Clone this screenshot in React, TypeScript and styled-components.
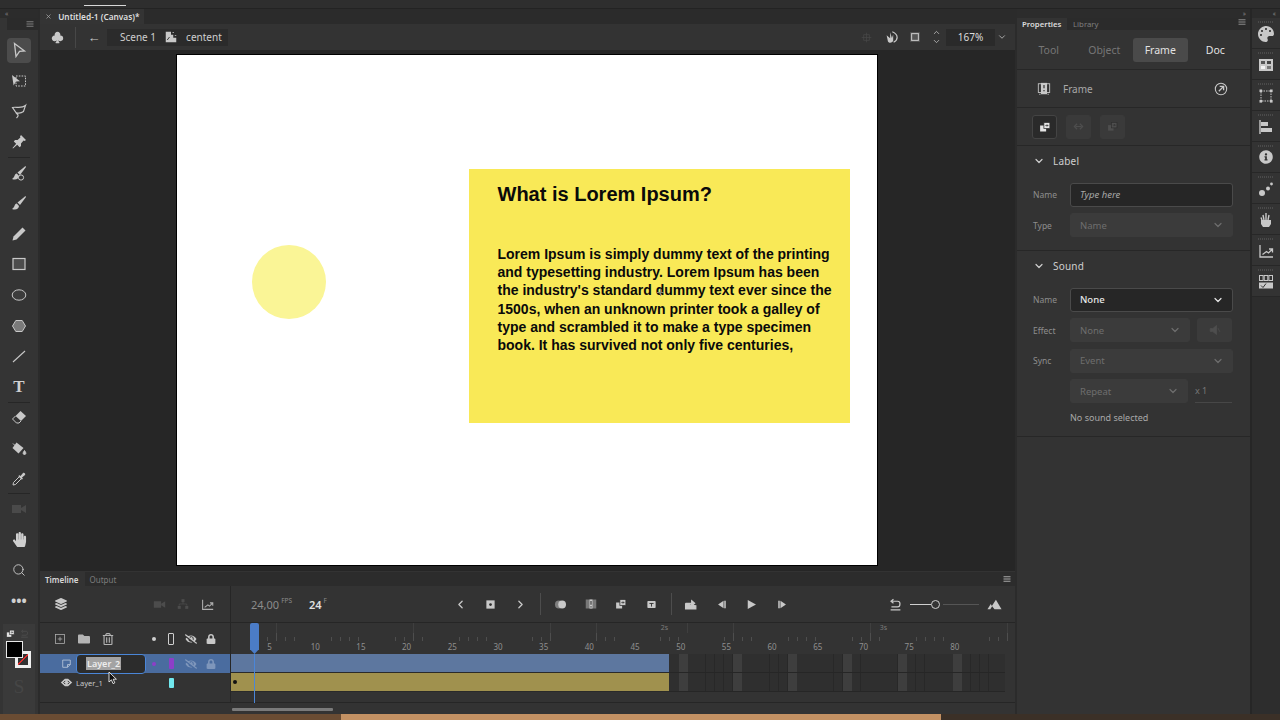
import React from 'react';
import styled, { createGlobalStyle } from 'styled-components';
import { ChevronDown, ChevronLeft, ChevronRight, ChevronUp, Search, X } from 'lucide-react';
import { BsSuitClubFill } from 'react-icons/bs';
import { FaEyeSlash, FaFolder, FaHandPaper, FaInfoCircle, FaLayerGroup, FaLock, FaPalette, FaRegTrashAlt } from 'react-icons/fa';

const GlobalStyle = createGlobalStyle`
  html, body { margin: 0; padding: 0; background: #2b2b2b; }
  * { box-sizing: border-box; }
  #root { width: 1280px; height: 720px; overflow: hidden; font-family: "Noto Sans", "Open Sans", sans-serif; }
`;

const icons: Record<string, React.ReactNode> = {
  select: <path d="M3.5 1.5 13.5 9 8.5 9.4 5 14.5Z" fill="none" stroke="currentColor" strokeWidth="1.3" />,
  transform: <><rect x="5" y="3" width="9.5" height="10" fill="none" stroke="currentColor" strokeDasharray="1.6 1.2" /><path d="M1 2 9 8.2 5 8.6 2.6 12.5Z" fill="currentColor" /></>,
  lasso: <path d="M1.5 4.5C5 3.5 10.5 6 14.5 2.5L12.5 8.5C10.5 10 7.5 10.5 5 9.5ZM5 9.5C5 11 8 11 7 13 6.5 14 6 14.5 5.5 15" fill="none" stroke="currentColor" strokeWidth="1.2" />,
  pin: <path d="M10 1 15 6 13.6 7 12.6 6.6 10 9.4 10 12 8.6 13.2 6.2 10.8 2 14.5 1.5 14 5.2 9.8 2.8 7.4 4 6 6.6 6 9.4 3.4 9 2.4Z" fill="currentColor" />,
  fluid: <><path d="M14.5 1 6.5 7.5 9 10 15 2Z" fill="currentColor" /><circle cx="10" cy="12.5" r="2.6" fill="none" stroke="currentColor" /><path d="M5.8 8.5C3 9 4 12.5 1 14 5 15.5 8 13.5 8 11Z" fill="currentColor" /></>,
  brush: <><path d="M14.5 1 6.5 7.5 9 10 15 2Z" fill="currentColor" /><path d="M5.8 8.5C3 9 4 12.5 1 14 5 15.5 8 13.5 8 11Z" fill="currentColor" /></>,
  pencil: <path d="M11.5 1.5 14.5 4.5 5.5 13.5 1.5 14.5 2.5 10.5Z" fill="currentColor" />,
  rect: <rect x="2" y="2.5" width="12" height="11" fill="#4c4c4c" stroke="currentColor" strokeWidth="1.2" />,
  oval: <ellipse cx="8" cy="8" rx="6.8" ry="5.2" fill="#3c3c3c" stroke="currentColor" strokeWidth="1" />,
  poly: <path d="M4.8 2.5H11.2L14.5 8 11.2 13.5H4.8L1.5 8Z" fill="#7a7a7a" stroke="currentColor" />,
  line: <path d="M2 14 14 3" stroke="currentColor" strokeWidth="1.1" />,
  eraser: <><path d="M9.5 2 15 7 10 12 4.5 7Z" fill="currentColor" /><path d="M4.5 7 1.5 10 5.5 14H8L10 12" fill="none" stroke="currentColor" /></>,
  bucket: <><path d="M5.5 2.5 12.5 8 7.5 13.5 1.5 8Z" fill="currentColor" /><path d="M2 3.5 4.5 6M13.5 10.5C15.5 13 15 14.5 13.5 14.5 12 14.5 11.5 13 13.5 10.5Z" fill="currentColor" stroke="currentColor" /></>,
  dropper: <><path d="M9 5 11 7 4.5 13.5 2 14 2.5 11.5Z" fill="none" stroke="currentColor" /><path d="M8 4 9.5 5 12 2C13 1 15 3 14 4L11 6.5 12 8 10.5 8.5 7.5 5.5Z" fill="currentColor" /></>,
  camera: <><rect x="1" y="4" width="9" height="8" fill="currentColor" /><path d="M10 7 15 4V12L10 9Z" fill="currentColor" /></>,
  parent: <><rect x="6" y="1.5" width="4" height="4" fill="currentColor" /><rect x="1" y="10.5" width="4" height="4" fill="currentColor" /><rect x="11" y="10.5" width="4" height="4" fill="currentColor" /><path d="M8 5V8H3V10M8 8H13V10" fill="none" stroke="currentColor" /></>,
  graph: <path d="M2 2V14H15M4.5 11.5 8.5 8.5 10.5 10 14 6.5M11 6H14.5V9.5" fill="none" stroke="currentColor" strokeWidth="1.3" />,
  newLayer: <><rect x="2" y="2" width="12" height="12" fill="none" stroke="currentColor" /><path d="M8 5V11M5 8H11" stroke="currentColor" /></>,
  frameKey: <><rect x="2" y="2" width="12" height="12" fill="currentColor" /><circle cx="8" cy="8" r="2" fill="#2c2c2c" /></>,
  onion: <><circle cx="6" cy="8" r="4.8" fill="#7f7f7f" /><circle cx="10" cy="8" r="4.8" fill="currentColor" /></>,
  multi: <><rect x="1" y="2" width="14" height="12" fill="#777" /><rect x="6" y="2" width="4" height="12" fill="currentColor" /><path d="M8 4V9M8 11V12.5" stroke="#2c2c2c" strokeWidth="1.4" /></>,
  swap: <><rect x="1.5" y="6" width="8" height="8" fill="currentColor" /><rect x="6.5" y="2" width="8" height="8" fill="currentColor" stroke="#2f2f2f" /><path d="M8.5 6H12M10.5 4.5 12 6 10.5 7.5" fill="none" stroke="#2f2f2f" /></>,
  insert: <><rect x="2" y="3" width="12" height="10" rx="1" fill="currentColor" /><path d="M5 6.5H11M8 6.5V11" stroke="#2c2c2c" strokeWidth="1.3" /></>,
  loop: <path d="M2 6.5V13.5H14.5V9M2 6.5H9.5M9.5 3.5 13 6.5 9.5 9.5Z" fill="currentColor" stroke="currentColor" strokeWidth="1.6" />,
  stepBack: <><path d="M11 2.5 3 8 11 13.5Z" fill="currentColor" /><rect x="12" y="2.5" width="2.2" height="11" fill="currentColor" /></>,
  play: <path d="M2.5 1.5 14.5 8 2.5 14.5Z" fill="currentColor" />,
  stepNext: <><rect x="1.8" y="2.5" width="2.2" height="11" fill="currentColor" /><path d="M5 2.5 13 8 5 13.5Z" fill="currentColor" /></>,
  undo: <path d="M2 14.5H14M4 4H10.5C12.5 4 13.5 5.4 13.5 7S12.5 11 10.5 11H3M5.5 1.5 2.5 4 5.5 6.5" fill="none" stroke="currentColor" strokeWidth="1.5" />,
  peaks: <path d="M0.5 13 4 7.5 5.2 9.5 9.5 3 15.5 13H8L5.5 9.8 3.5 13Z" fill="currentColor" />,
  scope: <><path d="M1 8H15M8 1V15" stroke="currentColor" /><rect x="4" y="4" width="8" height="8" fill="none" stroke="currentColor" /></>,
  handTurn: <><path d="M9.5 2C13 3.5 15 6 15 8.5S13 13 11 14" fill="none" stroke="currentColor" strokeWidth="1.4" /><path d="M3 6 7 9.5V2.5L9 9 10.5 5V12C10 14.5 6 15.5 4.5 13Z" fill="currentColor" /></>,
  clip: <><rect x="1.5" y="1.5" width="13" height="13" fill="#555" /><rect x="3.5" y="3.5" width="9" height="9" fill="none" stroke="currentColor" strokeWidth="1.4" /></>,
  breadcrumbClip: <><path d="M1 1H8V5H11V9H15V15H1Z" fill="currentColor" /><path d="M3 12 6 8M10 3 14 1M12 6 15 4" stroke="#2a2a2a" strokeWidth="1.2" /><path d="M10 2H12M13 6H15" stroke="currentColor" /></>,
  frameDoc: <><rect x="1.5" y="2" width="13" height="10" fill="none" stroke="currentColor" /><rect x="4.5" y="1" width="7" height="13" fill="currentColor" /><path d="M8 3.5V7M8 9V10.5" stroke="#333" strokeWidth="1.4" /><path d="M2.5 14H4M12 14H13.5" stroke="currentColor" /></>,
  arrowCircle: <><circle cx="8" cy="8" r="6.5" fill="none" stroke="currentColor" strokeWidth="1.2" /><path d="M5.5 10.5 10.5 5.5M6.5 5H11V9.5" fill="none" stroke="currentColor" strokeWidth="1.5" /></>,
  link: <path d="M6 4 2 8 6 12M10 4 14 8 10 12M4 8H12" fill="none" stroke="currentColor" strokeWidth="1.8" />,
  layerDoc: <path d="M2.5 3H13.5V9.5L9.5 13.5H2.5ZM13.5 9.5H9.5V13.5" fill="none" stroke="currentColor" strokeWidth="1.1" />,
  eyeCode: <><path d="M1 8 6 3.5H10L15 8 10 12.5H6Z" fill="currentColor" /><path d="M6.5 6 4.5 8 6.5 10M9.5 6 11.5 8 9.5 10" fill="none" stroke="#2f2f2f" strokeWidth="1.2" /></>,
  speaker: <path d="M1.5 6H5L10 2V14L5 10H1.5ZM12 5.5 14.5 10.5" fill="currentColor" stroke="currentColor" />,
  swatches: <><rect x="1" y="2" width="14" height="12" fill="currentColor" /><rect x="3" y="4" width="4" height="3" fill="#555" /><rect x="9" y="4" width="4" height="3" fill="#444" /><rect x="3" y="9" width="4" height="3" fill="#f2f2f2" /><rect x="9" y="9" width="4" height="3" fill="#777" /></>,
  handles: <><rect x="3" y="3" width="10" height="10" fill="none" stroke="currentColor" strokeDasharray="1.5 1" /><rect x="1.5" y="1.5" width="2.6" height="2.6" fill="currentColor" /><rect x="12" y="1.5" width="2.6" height="2.6" fill="currentColor" /><rect x="1.5" y="12" width="2.6" height="2.6" fill="currentColor" /><rect x="12" y="12" width="2.6" height="2.6" fill="currentColor" /></>,
  align: <><path d="M2 1V15" stroke="currentColor" strokeWidth="1.4" /><rect x="3" y="3" width="7" height="4" fill="currentColor" /><rect x="3" y="9" width="11" height="4" fill="currentColor" /></>,
  dots: <><circle cx="4" cy="12" r="3" fill="currentColor" /><circle cx="10" cy="7.5" r="2" fill="currentColor" /><circle cx="13.5" cy="3" r="1.4" fill="currentColor" /></>,
  handBrush: <><path d="M3 8H13V12L11 15H5L3 12Z" fill="currentColor" /><path d="M8 1V8M5 3 6 8M11 3 10 8M3 5.5 4 8" stroke="currentColor" strokeWidth="1.4" /></>,
  components: <><rect x="1.5" y="1.5" width="3.6" height="5" fill="none" stroke="currentColor" /><rect x="6.2" y="1.5" width="3.6" height="5" fill="none" stroke="currentColor" /><rect x="10.9" y="1.5" width="3.6" height="5" fill="none" stroke="currentColor" /><rect x="1" y="8.5" width="14" height="6" fill="currentColor" /><path d="M3 11.5 5 13.5 8 9.5" fill="none" stroke="#333" /></>,
  hamburger: <path d="M1 3.5H15M1 8H15M1 12.5H15" stroke="currentColor" strokeWidth="2.4" />,
};

const Svg = styled.svg<{ $tone?: string }>`
  display: block;
  flex: none;
  color: ${({ $tone }) => $tone || '#c8c8c8'};
`;

const Icon: React.FC<{ name: string; size?: number; tone?: string }> = ({ name, size = 16, tone }) => (
  <Svg $tone={tone} width={size} height={size} viewBox="0 0 16 16">{icons[name]}</Svg>
);

const Page = styled.div`
  width: 1280px;
  height: 720px;
  display: flex;
  flex-direction: column;
  background: #2b2b2b;
  color: #c8c8c8;
`;

const TopStrip = styled.div`
  height: 9px;
  flex: none;
  padding: 5px 0 0 84px;
  background: #2e2e2e;
  border-bottom: 1px solid #232323;
`;

const TitleMark = styled.div`
  width: 42px;
  height: 1px;
  background: #d8d8d8;
`;

const Main = styled.div`
  flex: 1;
  min-height: 0;
  display: flex;
`;

const DesktopStrip = styled.div`
  height: 6px;
  flex: none;
  display: flex;
  background: #3b3027;
`;

const DesktopEdge = styled.div`
  width: 341px;
  background: #6a4c33;
`;

const DesktopWindow = styled.div`
  width: 600px;
  background: #c39163;
`;

/* tools on the left */
const ToolBar = styled.div`
  width: 38px;
  flex: none;
  display: flex;
  flex-direction: column;
  background: #343434;
  margin-right: 2px;
`;

const Collapse = styled.div<{ $align?: string }>`
  height: 9px;
  flex: none;
  display: flex;
  align-items: center;
  justify-content: ${({ $align }) => $align || 'flex-start'};
  padding: 0 5px;
  background: #2c2c2c;
  color: #7d7d7d;
  font-size: 7px;
  line-height: 9px;
  letter-spacing: -1px;
`;

const ToolMenu = styled.div`
  height: 12px;
  margin-left: 7px;
  flex: none;
  display: flex;
  justify-content: flex-end;
  align-items: center;
  padding-right: 4px;
  background: #2b2b2b;
  margin-bottom: 5px;
`;

const Tool = styled.div<{ $active?: boolean }>`
  height: 30.6px;
  flex: none;
  display: flex;
  align-items: center;
  justify-content: center;
  position: relative;
  &::before {
    content: '';
    position: absolute;
    inset: 3px 7px;
    border-radius: 4px;
    background: ${({ $active }) => ($active ? '#4c4c4c' : 'transparent')};
  }
  & > * { position: relative; }
`;

const ToolGlyph = styled.span<{ $dim?: boolean }>`
  font-family: "Liberation Serif", serif;
  font-weight: ${({ $dim }) => ($dim ? 400 : 700)};
  font-size: ${({ $dim }) => ($dim ? 19 : 17)}px;
  line-height: 1;
  color: ${({ $dim }) => ($dim ? '#464646' : '#d0d0d0')};
`;

const ToolRule = styled.div`
  height: 1px;
  margin: -0.5px 8px;
  background: #262626;
`;

const ColorWell = styled.div`
  flex: 1;
  margin: 8px 3px 0 3px;
  padding-top: 5px;
  background: #3a3a3a;
  display: flex;
  flex-direction: column;
  align-items: center;
`;

const SwapRow = styled.div`
  display: flex;
  gap: 5px;
  align-self: flex-start;
  margin-left: 3px;
`;

const Swatches = styled.div`
  width: 26px;
  height: 27px;
  margin-top: 3px;
  position: relative;
  background: linear-gradient(#0000, #0000);
`;

const StrokeSwatch = styled.div`
  position: absolute;
  right: 1px;
  bottom: 0;
  width: 16px;
  height: 17px;
  background: linear-gradient(135deg, transparent 46%, #e02a2a 46%, #e02a2a 54%, transparent 54%), #333;
  border: 3px solid #f0f0f0;
`;

const FillSwatch = styled.div`
  position: absolute;
  left: 0;
  top: 0;
  width: 17px;
  height: 17px;
  background: #000;
  border: 1.5px solid #e8e8e8;
`;

const DimLetter = styled.div`
  margin-top: 8px;
  height: 24px;
  text-align: center;
`;

/* document column */
const Center = styled.div`
  width: 975px;
  flex: none;
  display: flex;
  flex-direction: column;
`;

const TabBar = styled.div`
  height: 15px;
  flex: none;
  display: flex;
  background: #2b2b2b;
`;

const DocTab = styled.div`
  width: 104px;
  display: flex;
  align-items: center;
  gap: 4px;
  padding-left: 5px;
  background: #343434;
  color: #dedede;
  font-size: 8.3px;
  font-weight: 600;
  white-space: nowrap;
`;

const EditBar = styled.div`
  height: 26px;
  flex: none;
  display: flex;
  align-items: center;
  background: #333;
`;

const ClubSlot = styled.div`
  width: 36px;
  height: 21px;
  display: flex;
  align-items: center;
  justify-content: center;
  border-right: 1px solid #474747;
  color: #c8c8c8;
  margin-right: 10px;
`;

const BackSlot = styled.div`
  width: 16px;
  margin-right: 5px;
  display: flex;
  justify-content: center;
  font-size: 13px;
  line-height: 1;
  font-weight: 700;
  color: #c8c8c8;
`;

const Crumbs = styled.div`
  width: 121px;
  height: 17px;
  display: flex;
  align-items: center;
  padding-left: 13px;
  background: #2b2b2b;
  font-size: 10px;
  color: #cfcfcf;
`;

const CrumbIcon = styled.span`
  margin: 0 9px;
`;

const ViewTools = styled.div`
  margin-left: auto;
  display: flex;
  align-items: center;
  padding-right: 7px;
`;

const ViewSlot = styled.div<{ $w: number }>`
  width: ${({ $w }) => $w}px;
  display: flex;
  flex-direction: column;
  align-items: center;
  justify-content: center;
`;

const ZoomBox = styled.div`
  width: 49px;
  height: 17px;
  margin-right: 0;
  display: flex;
  align-items: center;
  justify-content: center;
  background: #2a2a2a;
  color: #dcdcdc;
  font-size: 10px;
`;

const ZoomChevron = styled.div`
  width: 13px;
  display: flex;
  justify-content: center;
`;

const StageArea = styled.div`
  flex: 1;
  min-height: 0;
  padding: 5px 0 0 137px;
  background: #262626;
`;

const Stage = styled.div`
  width: 700px;
  height: 510px;
  position: relative;
  background: #fff;
  box-shadow: 0 0 0 1px #000;
`;

const Circle = styled.div`
  position: absolute;
  left: 75px;
  top: 190px;
  width: 74px;
  height: 74px;
  border-radius: 50%;
  background: #faf596;
`;

const YellowCard = styled.div`
  position: absolute;
  left: 292px;
  top: 114px;
  width: 381px;
  height: 254px;
  padding: 13px 0 0 28.5px;
  background: #f9e957;
  color: #0a0a0a;
  font-family: "Liberation Sans", Arial, sans-serif;
  font-weight: 700;
`;

const CardTitle = styled.div`
  font-size: 20px;
  line-height: 25px;
`;

const CardBody = styled.div`
  width: 340px;
  margin-top: 38px;
  font-size: 14px;
  line-height: 18.2px;
`;

const CrossCursor = styled.div`
  position: absolute;
  left: 188px;
  top: 120px;
  width: 7px;
  height: 7px;
  background: linear-gradient(#8a8a7a, #8a8a7a) center/1px 100% no-repeat, linear-gradient(#8a8a7a, #8a8a7a) center/100% 1px no-repeat;
`;

/* timeline */
const Timeline = styled.div`
  height: 143px;
  flex: none;
  display: flex;
  flex-direction: column;
  background: #333;
`;

const PanelTabs = styled.div`
  height: 14px;
  flex: none;
  margin-top: 1px;
  display: flex;
  align-items: center;
  background: #2c2c2c;
  padding-right: 4px;
`;

const PanelTab = styled.div<{ $active?: boolean }>`
  height: 100%;
  padding: 0 6px 0 5px;
  display: flex;
  align-items: center;
  background: ${({ $active }) => ($active ? '#333' : 'transparent')};
  color: ${({ $active }) => ($active ? '#d8d8d8' : '#7c7c7c')};
  font-size: 8px;
  font-weight: ${({ $active }) => ($active ? 600 : 400)};
`;

const MenuEnd = styled.div`
  margin-left: auto;
`;

const TimelineRow = styled.div<{ $h: number; $line?: boolean }>`
  height: ${({ $h }) => $h}px;
  flex: none;
  display: flex;
  border-bottom: ${({ $line }) => ($line ? '1px solid #262626' : 'none')};
`;

const LayerCol = styled.div<{ $bg?: string; $pad?: number }>`
  width: 191px;
  flex: none;
  display: flex;
  align-items: center;
  position: relative;
  padding-left: ${({ $pad }) => $pad ?? 0}px;
  background: ${({ $bg }) => $bg || 'transparent'};
  border-right: 1px solid #262626;
`;

const FrameCol = styled.div`
  flex: 1;
  min-width: 0;
  display: flex;
  align-items: center;
`;

const Slot = styled.div<{ $w?: number }>`
  width: ${({ $w }) => $w ?? 24}px;
  flex: none;
  display: flex;
  align-items: center;
  justify-content: center;
`;

const PushRight = styled.div<{ $end: number }>`
  margin-left: auto;
  padding-right: ${({ $end }) => $end}px;
  display: flex;
  align-items: center;
`;

const Fps = styled.div`
  width: 194px;
  margin-left: 20px;
  flex: none;
  display: flex;
  align-items: flex-start;
  gap: 0;
  color: #8c8c8c;
  font-size: 11px;
`;

const Sup = styled.span<{ $gap?: number }>`
  font-size: 6.5px;
  margin: -1px 0 0 2px;
  margin-right: ${({ $gap }) => $gap ?? 0}px;
`;

const FrameNo = styled.span`
  color: #e0e0e0;
  font-weight: 600;
`;

const BarRule = styled.div`
  width: 1px;
  height: 22px;
  flex: none;
  margin: 0 4px;
  background: #4d4d4d;
`;

const ZoomSlider = styled.div`
  width: 69px;
  height: 9px;
  margin: 0 3px;
  position: relative;
  background: linear-gradient(90deg, #d0d0d0 0 21px, transparent 21px 33px, #555 33px) center/100% 1px no-repeat;
`;

const SliderKnob = styled.div`
  position: absolute;
  left: 20.5px;
  top: 0;
  width: 9px;
  height: 9px;
  border-radius: 50%;
  border: 1.5px solid #d0d0d0;
`;

const StatusDot = styled.div<{ $c: string; $s?: number }>`
  width: ${({ $s }) => $s ?? 4}px;
  height: ${({ $s }) => $s ?? 4}px;
  border-radius: 50%;
  background: ${({ $c }) => $c};
`;

const KeyBox = styled.div<{ $c: string; $line?: string; $h?: number; $w?: number }>`
  width: ${({ $w }) => $w ?? 6}px;
  height: ${({ $h }) => $h ?? 10}px;
  border-radius: 1px;
  background: ${({ $c }) => $c};
  border: 1px solid ${({ $line }) => $line || 'transparent'};
`;

const StatusCells: React.FC<{ dot: React.ReactNode; box: React.ReactNode; eye?: string; lock?: string }> = ({ dot, box, eye, lock }) => (
  <PushRight $end={10}>
    <Slot $w={16}>{dot}</Slot>
    <Slot $w={18}>{box}</Slot>
    <Slot $w={21}>{eye && <FaEyeSlash size={12} color={eye} />}</Slot>
    <Slot $w={19}>{lock && <FaLock size={10} color={lock} />}</Slot>
  </PushRight>
);

const NameField = styled.div`
  width: 72px;
  height: 20px;
  margin-left: 2px;
  display: flex;
  align-items: center;
  padding-left: 9px;
  background: #2c2c2c;
  border: 1.5px solid #4a86d8;
  border-radius: 4px;
  font-size: 9px;
  font-weight: 600;
  color: #eee;
`;

const SelectedText = styled.span`
  background: #a3a3a3;
  padding: 0 1px;
`;

const LayerName = styled.span`
  margin-left: 2px;
  font-size: 7.5px;
  color: #c8c8c8;
`;

const Pointer = styled.div`
  position: absolute;
  left: 68px;
  top: 14px;
`;

const Ruler = styled.div`
  width: 100%;
  height: 100%;
  display: flex;
  flex-direction: column;
`;

const Seconds = styled.div`
  height: 10px;
  flex: none;
  display: flex;
  font-size: 7px;
  line-height: 10px;
  color: #7d7d7d;
  background: repeating-linear-gradient(90deg, transparent 0 45.1px, #3f3f3f 45.1px 45.7px);
`;

const Second = styled.span<{ $w: number }>`
  width: ${({ $w }) => $w}px;
  flex: none;
  text-align: right;
  padding-right: 1px;
`;

const Ticks = styled.div`
  height: 8px;
  flex: none;
  background:
    repeating-linear-gradient(90deg, transparent 0 8.64px, #4e4e4e 8.64px 9.14px) 0 100%/100% 4px no-repeat,
    repeating-linear-gradient(90deg, transparent 0 45.2px, #4e4e4e 45.2px 45.7px);
`;

const RulerLabels = styled.div`
  flex: 1;
  display: flex;
  padding-left: 15.7px;
`;

const RulerLabel = styled.span`
  width: 45.7px;
  flex: none;
  text-align: center;
  font-size: 8px;
  line-height: 11px;
  color: #8f8f8f;
`;

const Span = styled.div<{ $c: string }>`
  width: 438px;
  height: 100%;
  flex: none;
  display: flex;
  align-items: center;
  padding-left: 2px;
  background: ${({ $c }) => $c};
  border-bottom: 1px solid #2a2a2a;
`;

const EmptyFrames = styled.div`
  width: 336px;
  height: 100%;
  flex: none;
  border-bottom: 1px solid #262626;
  background:
    repeating-linear-gradient(90deg, transparent 0 9.5px, #3e3e3e 9.5px 18.6px, transparent 18.6px 54.84px) 0 0/100% 100%,
    repeating-linear-gradient(90deg, #2f2f2f 0 8.64px, #282828 8.64px 9.14px);
`;

const FrameTrack = styled.div`
  width: 784px;
  flex: none;
  height: 100%;
  display: flex;
`;

const Tracks = styled.div`
  position: relative;
`;

const Playhead = styled.div`
  position: absolute;
  left: 210px;
  top: -31px;
  width: 9px;
  height: 31px;
  background: #4b7cc7;
  border-radius: 2px 2px 0 0;
  clip-path: polygon(0 0, 100% 0, 100% 85%, 50% 100%, 0 85%);
`;

const PlayLine = styled.div`
  position: absolute;
  left: 214px;
  top: 0;
  width: 1px;
  height: 49px;
  background: #4b86d8;
`;

const ScrollRow = styled.div`
  flex: 1;
  padding: 5px 0 0 192px;
`;

const ScrollThumb = styled.div`
  width: 101px;
  height: 3px;
  border-radius: 1px;
  background: #7a7a7a;
`;

/* properties panel */
const Properties = styled.div`
  width: 234px;
  flex: none;
  margin-left: 2px;
  display: flex;
  flex-direction: column;
  background: #333;
  border-right: 1px solid #262626;
`;

const PropTabs = styled.div`
  height: 12px;
  flex: none;
  display: flex;
  background: #2b2b2b;
  padding-right: 4px;
`;

const PropTab = styled.div<{ $active?: boolean }>`
  width: ${({ $active }) => ($active ? 50 : 46)}px;
  display: flex;
  align-items: center;
  padding-left: ${({ $active }) => ($active ? 5 : 6)}px;
  background: ${({ $active }) => ($active ? '#333' : 'transparent')};
  color: ${({ $active }) => ($active ? '#dcdcdc' : '#7f7f7f')};
  font-size: 7.8px;
  font-weight: ${({ $active }) => ($active ? 600 : 400)};
`;

const SubTabs = styled.div`
  height: 40px;
  flex: none;
  display: grid;
  grid-template-columns: repeat(4, 55.5px);
  align-items: center;
  padding-left: 4px;
  border-bottom: 1px solid #272727;
`;

const SubTab = styled.div<{ $state: 'dim' | 'on' | 'plain' }>`
  height: 24px;
  margin: 0 0 0 ${({ $state }) => ($state === 'on' ? 1 : 0)}px;
  display: flex;
  align-items: center;
  justify-content: center;
  border-radius: 3px;
  font-size: 10.5px;
  background: ${({ $state }) => ($state === 'on' ? '#4a4a4a' : 'transparent')};
  color: ${({ $state }) => ($state === 'dim' ? '#767676' : '#e2e2e2')};
`;

const FrameRow = styled.div`
  height: 38px;
  flex: none;
  display: flex;
  align-items: center;
  padding: 0 22px 0 20px;
  border-bottom: 1px solid #272727;
  color: #a8a8a8;
  font-size: 10px;
`;

const FrameLabel = styled.span`
  margin-left: 12px;
  flex: 1;
`;

const SymbolRow = styled.div`
  height: 38px;
  flex: none;
  display: flex;
  align-items: center;
  gap: 9px;
  padding-left: 15px;
  border-bottom: 1px solid #272727;
`;

const SymbolButton = styled.div<{ $on?: boolean }>`
  width: 25px;
  height: 24px;
  display: flex;
  align-items: center;
  justify-content: center;
  border-radius: 3px;
  background: ${({ $on }) => ($on ? '#2a2a2a' : '#3a3a3a')};
  border: 1px solid ${({ $on }) => ($on ? '#444' : '#3a3a3a')};
`;

const Section = styled.div<{ $h: number }>`
  height: ${({ $h }) => $h}px;
  flex: none;
  padding: 0 18px 0 16px;
  border-bottom: 1px solid #272727;
`;

const SectionHead = styled.div`
  height: 30px;
  display: flex;
  align-items: center;
  gap: 8px;
  padding-left: -1px;
  font-size: 10px;
  color: #cfcfcf;
  letter-spacing: 0.2px;
`;

const Fields = styled.div`
  margin-top: 6.5px;
  display: flex;
  flex-direction: column;
  gap: 6.5px;
`;

const Field = styled.div`
  display: flex;
  align-items: center;
  height: 24px;
`;

const FieldLabel = styled.span`
  width: 37px;
  flex: none;
  font-size: 8.5px;
  color: #8e8e8e;
`;

const Control = styled.div<{ $w?: number; $kind?: 'input' | 'on' | 'off' }>`
  width: ${({ $w }) => $w ?? 163}px;
  height: 24px;
  flex: none;
  display: flex;
  align-items: center;
  justify-content: space-between;
  padding: 0 8px 0 9px;
  border-radius: 3px;
  font-size: 9.5px;
  background: ${({ $kind }) => ($kind === 'off' || !$kind ? '#3b3b3b' : '#262626')};
  border: 1px solid ${({ $kind }) => ($kind === 'off' || !$kind ? '#3b3b3b' : '#4a4a4a')};
  color: ${({ $kind }) => ($kind === 'on' ? '#e8e8e8' : $kind === 'input' ? '#a8a8a8' : '#6e6e6e')};
  font-style: ${({ $kind }) => ($kind === 'input' ? 'italic' : 'normal')};
  font-weight: ${({ $kind }) => ($kind === 'on' ? 500 : 400)};
`;

const SpeakerButton = styled.div`
  width: 36px;
  height: 24px;
  margin-left: 7px;
  display: flex;
  align-items: center;
  justify-content: center;
  border-radius: 3px;
  background: #3b3b3b;
`;

const LoopCount = styled.div`
  width: 38px;
  height: 24px;
  margin-left: 7px;
  display: flex;
  align-items: center;
  border-bottom: 1px solid #474747;
  font-size: 9px;
  color: #777;
`;

const SoundNote = styled.div`
  margin: 8px 0 0 37px;
  font-size: 9px;
  line-height: 14px;
  color: #a8a8a8;
`;

/* far right rail */
const Rail = styled.div`
  flex: 1;
  display: flex;
  flex-direction: column;
  background: #2d2d2d;
  border-left: 1px solid #262626;
`;

const RailCell = styled.div`
  height: 31px;
  flex: none;
  padding-top: 3px;
  display: flex;
  flex-direction: column;
  align-items: center;
  background: #333;
  border-bottom: 1px solid #272727;
`;

const Grip = styled.div`
  width: 16px;
  height: 2px;
  margin-bottom: 3px;
  flex: none;
  background: repeating-linear-gradient(90deg, #4a4a4a 0 1px, transparent 1px 2px);
`;

const Chev: React.FC<{ tone?: string }> = ({ tone = '#cfcfcf' }) => <ChevronDown size={12} color={tone} strokeWidth={2.4} />;

const tools = [
  ['transform', 'lasso', 'pin'],
  ['fluid', 'brush', 'pencil', 'rect', 'oval', 'poly', 'line', 'T'],
  ['eraser', 'bucket', 'dropper'],
];

const railIcons = ['swatches', 'handles', 'align', 'info', 'dots', 'handBrush', 'graph', 'components'];
const frameLabels = [5, 10, 15, 20, 25, 30, 35, 40, 45, 50, 55, 60, 65, 70, 75, 80];

const LeftTools = () => (
  <ToolBar>
    <Collapse>‹‹</Collapse>
    <ToolMenu><Icon name="hamburger" size={8} tone="#7c7c7c" /></ToolMenu>
    <Tool $active><Icon name="select" /></Tool>
    {tools.map((group, i) => (
      <React.Fragment key={i}>
        {group.map(t => (
          <Tool key={t}>{t === 'T' ? <ToolGlyph>T</ToolGlyph> : <Icon name={t} />}</Tool>
        ))}
        <ToolRule />
      </React.Fragment>
    ))}
    <Tool><Icon name="camera" tone="#4a4a4a" /></Tool>
    <Tool><FaHandPaper size={15} color="#cfcfcf" /></Tool>
    <Tool><Search size={14} color="#c8c8c8" strokeWidth={1.6} /></Tool>
    <Tool><ToolGlyph as="span" style={{ fontFamily: 'Noto Sans', fontSize: 14 }}>•••</ToolGlyph></Tool>
    <ColorWell>
      <SwapRow>
        <Icon name="swap" size={9} tone="#e0e0e0" />
        <Icon name="undo" size={9} tone="#4e4e4e" />
      </SwapRow>
      <Swatches>
        <StrokeSwatch />
        <FillSwatch />
      </Swatches>
      <DimLetter><ToolGlyph $dim>S</ToolGlyph></DimLetter>
    </ColorWell>
  </ToolBar>
);

const Document = () => (
  <>
    <TabBar>
      <DocTab><X size={7} color="#a8a8a8" strokeWidth={2.5} />&nbsp;Untitled-1 (Canvas)*</DocTab>
    </TabBar>
    <EditBar>
      <ClubSlot><BsSuitClubFill size={13} /></ClubSlot>
      <BackSlot>←</BackSlot>
      <Crumbs>
        Scene 1
        <CrumbIcon><Icon name="breadcrumbClip" size={12} /></CrumbIcon>
        centent
      </Crumbs>
      <ViewTools>
        <ViewSlot $w={24}><Icon name="scope" size={11} tone="#484848" /></ViewSlot>
        <ViewSlot $w={25}><Icon name="handTurn" size={14} /></ViewSlot>
        <ViewSlot $w={24}><Icon name="clip" size={12} /></ViewSlot>
        <ViewSlot $w={19}>
          <ChevronUp size={9} strokeWidth={2} />
          <ChevronDown size={9} strokeWidth={2} />
        </ViewSlot>
        <ZoomBox>167%</ZoomBox>
        <ZoomChevron><ChevronDown size={10} color="#bdbdbd" strokeWidth={2} /></ZoomChevron>
      </ViewTools>
    </EditBar>
    <StageArea>
      <Stage>
        <Circle />
        <YellowCard>
          <CardTitle>What is Lorem Ipsum?</CardTitle>
          <CardBody>
            Lorem Ipsum is simply dummy text of the printing and typesetting industry. Lorem Ipsum has been the industry's standard dummy text ever since the 1500s, when an unknown printer took a galley of type and scrambled it to make a type specimen book. It has survived not only five centuries,
          </CardBody>
          <CrossCursor />
        </YellowCard>
      </Stage>
    </StageArea>
  </>
);

const TimelinePanel = () => (
  <Timeline>
    <PanelTabs>
      <PanelTab $active>Timeline</PanelTab>
      <PanelTab>Output</PanelTab>
      <MenuEnd><Icon name="hamburger" size={8} tone="#a8a8a8" /></MenuEnd>
    </PanelTabs>
    <TimelineRow $h={37} $line>
      <LayerCol $pad={9}>
        <Slot><FaLayerGroup size={12} color="#c8c8c8" /></Slot>
        <PushRight $end={11}>
          <Slot><Icon name="camera" size={13} tone="#4c4c4c" /></Slot>
          <Slot><Icon name="parent" size={12} tone="#4c4c4c" /></Slot>
          <Slot><Icon name="graph" size={13} tone="#b0b0b0" /></Slot>
        </PushRight>
      </LayerCol>
      <FrameCol>
        <Fps>
          24,00<Sup $gap={17}>FPS</Sup>
          <FrameNo>24</FrameNo><Sup>F</Sup>
        </Fps>
        <Slot $w={30.4}><ChevronLeft size={13} strokeWidth={2.4} /></Slot>
        <Slot $w={30.4}><Icon name="frameKey" size={11} /></Slot>
        <Slot $w={30.4}><ChevronRight size={13} strokeWidth={2.4} /></Slot>
        <BarRule />
        <Slot $w={30.4}><Icon name="onion" size={13} /></Slot>
        <Slot $w={30.4}><Icon name="multi" size={12} /></Slot>
        <Slot $w={30.4}><Icon name="swap" size={12} /></Slot>
        <Slot $w={30.4}><Icon name="insert" size={11} /></Slot>
        <BarRule />
        <Slot $w={30.4}><Icon name="loop" size={13} /></Slot>
        <Slot $w={30.4}><Icon name="stepBack" size={11} /></Slot>
        <Slot $w={30.4}><Icon name="play" size={11} /></Slot>
        <Slot $w={30.4}><Icon name="stepNext" size={11} /></Slot>
        <PushRight $end={9}>
          <Slot><Icon name="undo" size={13} /></Slot>
          <ZoomSlider><SliderKnob /></ZoomSlider>
          <Slot><Icon name="peaks" size={15} /></Slot>
        </PushRight>
      </FrameCol>
    </TimelineRow>
    <TimelineRow $h={31}>
      <LayerCol $pad={8}>
        <Slot><Icon name="newLayer" size={12} tone="#b4b4b4" /></Slot>
        <Slot><FaFolder size={12} color="#b4b4b4" /></Slot>
        <Slot><FaRegTrashAlt size={12} color="#b4b4b4" /></Slot>
        <StatusCells
          dot={<StatusDot $c="#cfcfcf" />}
          box={<KeyBox $c="#333" $line="#cfcfcf" $h={12} />}
          eye="#c8c8c8"
          lock="#c8c8c8"
        />
      </LayerCol>
      <Ruler>
        <Seconds>
          <Second $w={438}>2s</Second>
          <Second $w={219}>3s</Second>
        </Seconds>
        <Ticks />
        <RulerLabels>
          {frameLabels.map(n => <RulerLabel key={n}>{n}</RulerLabel>)}
        </RulerLabels>
      </Ruler>
    </TimelineRow>
    <Tracks>
      <TimelineRow $h={19}>
        <LayerCol $bg="#4a6c9f" $pad={18}>
          <Slot $w={16}><Icon name="layerDoc" size={11} tone="#c4d0e0" /></Slot>
          <NameField><SelectedText>Layer_2</SelectedText></NameField>
          <StatusCells
            dot={<StatusDot $c="#8d3fc8" />}
            box={<KeyBox $c="#8d3fc8" $h={11} $w={5} />}
            eye="#7e96bb"
            lock="#7e96bb"
          />
          <Pointer>
            <svg width="10" height="14" viewBox="0 0 10 14">
              <path d="M1 1V11L3.4 8.8 5 12.6 6.8 11.8 5.2 8.2H8.4Z" fill="#111" stroke="#eee" strokeWidth="0.9" />
            </svg>
          </Pointer>
        </LayerCol>
        <FrameTrack>
          <Span $c="#5d779f"><StatusDot $c="transparent" /></Span>
          <EmptyFrames />
        </FrameTrack>
      </TimelineRow>
      <TimelineRow $h={19}>
        <LayerCol $pad={18}>
          <Slot $w={16}><Icon name="eyeCode" size={13} /></Slot>
          <LayerName>Layer_1</LayerName>
          <StatusCells dot={null} box={<KeyBox $c="#71e8ee" $w={5} />} />
        </LayerCol>
        <FrameTrack>
          <Span $c="#a0914e"><StatusDot $c="#111" /></Span>
          <EmptyFrames />
        </FrameTrack>
      </TimelineRow>
      <TimelineRow $h={11} $line>
        <LayerCol />
      </TimelineRow>
      <Playhead />
      <PlayLine />
    </Tracks>
    <ScrollRow><ScrollThumb /></ScrollRow>
  </Timeline>
);

const PropertiesPanel = () => (
  <Properties>
    <Collapse $align="flex-end">››</Collapse>
    <PropTabs>
      <PropTab $active>Properties</PropTab>
      <PropTab>Library</PropTab>
      <MenuEnd><Icon name="hamburger" size={8} tone="#8a8a8a" /></MenuEnd>
    </PropTabs>
    <SubTabs>
      <SubTab $state="dim">Tool</SubTab>
      <SubTab $state="dim">Object</SubTab>
      <SubTab $state="on">Frame</SubTab>
      <SubTab $state="plain">Doc</SubTab>
    </SubTabs>
    <FrameRow>
      <Icon name="frameDoc" size={14} />
      <FrameLabel>Frame</FrameLabel>
      <Icon name="arrowCircle" size={14} />
    </FrameRow>
    <SymbolRow>
      <SymbolButton $on><Icon name="swap" size={12} tone="#e4e4e4" /></SymbolButton>
      <SymbolButton><Icon name="link" size={11} tone="#4e4e4e" /></SymbolButton>
      <SymbolButton><Icon name="swap" size={11} tone="#4e4e4e" /></SymbolButton>
    </SymbolRow>
    <Section $h={105}>
      <SectionHead><Chev />Label</SectionHead>
      <Fields>
        <Field>
          <FieldLabel>Name</FieldLabel>
          <Control $kind="input">Type here</Control>
        </Field>
        <Field>
          <FieldLabel>Type</FieldLabel>
          <Control $kind="off">Name<Chev tone="#6e6e6e" /></Control>
        </Field>
      </Fields>
    </Section>
    <Section $h={186}>
      <SectionHead><Chev />Sound</SectionHead>
      <Fields>
        <Field>
          <FieldLabel>Name</FieldLabel>
          <Control $kind="on">None<Chev tone="#e8e8e8" /></Control>
        </Field>
        <Field>
          <FieldLabel>Effect</FieldLabel>
          <Control $kind="off" $w={120}>None<Chev tone="#6e6e6e" /></Control>
          <SpeakerButton><Icon name="speaker" size={12} tone="#4e4e4e" /></SpeakerButton>
        </Field>
        <Field>
          <FieldLabel>Sync</FieldLabel>
          <Control $kind="off">Event<Chev tone="#6e6e6e" /></Control>
        </Field>
        <Field>
          <FieldLabel />
          <Control $kind="off" $w={118}>Repeat<Chev tone="#6e6e6e" /></Control>
          <LoopCount>x 1</LoopCount>
        </Field>
      </Fields>
      <SoundNote>No sound selected</SoundNote>
    </Section>
  </Properties>
);

const RightRail = () => (
  <Rail>
    <Collapse $align="flex-end">‹‹</Collapse>
    <RailCell><Grip /><FaPalette size={16} color="#c8c8c8" /></RailCell>
    {railIcons.map(name => (
      <RailCell key={name}>
        <Grip />
        {name === 'info' ? <FaInfoCircle size={14} color="#c8c8c8" /> : <Icon name={name} size={16} />}
      </RailCell>
    ))}
  </Rail>
);

export default function App() {
  return (
    <Page>
      <GlobalStyle />
      <TopStrip><TitleMark /></TopStrip>
      <Main>
        <LeftTools />
        <Center>
          <Document />
          <TimelinePanel />
        </Center>
        <PropertiesPanel />
        <RightRail />
      </Main>
      <DesktopStrip>
        <DesktopEdge />
        <DesktopWindow />
      </DesktopStrip>
    </Page>
  );
}
